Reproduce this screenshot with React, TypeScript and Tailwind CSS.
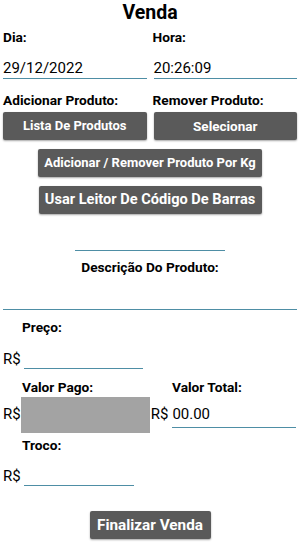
import React from "react";

function Label({ children, className = "" }: { children: React.ReactNode; className?: string }) {
  return <p className={`h-4 text-[13.7px] font-bold leading-4 whitespace-nowrap text-black ${className}`}>{children}</p>;
}

function Btn({ children, className = "" }: { children: React.ReactNode; className?: string }) {
  return (
    <button
      className={`h-7 whitespace-nowrap rounded-[2px] bg-[#5a5a5a] font-bold text-white shadow-[0_1px_2px_rgba(0,0,0,0.35)] ${className}`}
    >
      {children}
    </button>
  );
}

function Line({ className = "" }: { className?: string }) {
  return <div className={`h-px bg-[#4e8ea5] ${className}`} />;
}

function MoneyRow({ lineWidth, className = "" }: { lineWidth: string; className?: string }) {
  return (
    <div className={`flex items-start pl-[3px] ${className}`}>
      <span className="h-4 text-[15px] leading-4">R$</span>
      <Line className={`ml-[3px] mt-[17px] ${lineWidth}`} />
    </div>
  );
}

export default function App() {
  return (
    <div className="w-[300px] h-[551px] bg-white text-black font-['Roboto',sans-serif] overflow-hidden">
      <h1 className="h-[25px] text-center text-[19.5px] font-bold leading-[25px]">Venda</h1>

      <div className="mt-[4px] grid grid-cols-2 gap-x-[7px] px-[3px]">
        <div>
          <Label>Dia:</Label>
          <p className="mt-[14px] h-[18px] text-[15px] leading-[18px]">29/12/2022</p>
          <Line className="mt-[1px]" />
        </div>
        <div>
          <Label className="-ml-[1px]">Hora:</Label>
          <p className="mt-[14px] h-[18px] text-[15px] leading-[18px]">20:26:09</p>
          <Line className="mt-[1px]" />
        </div>
      </div>

      <div className="mt-[13px] grid grid-cols-2 gap-x-[7px] px-[3px]">
        <Label>Adicionar Produto:</Label>
        <Label className="-ml-[1px]">Remover Produto:</Label>
      </div>

      <div className="mt-[4px] grid grid-cols-2 gap-x-[7px] px-[3px]">
        <Btn className="text-[13px]">Lista De Produtos</Btn>
        <Btn className="text-[13.5px]">Selecionar</Btn>
      </div>

      <div className="mt-[9px] flex flex-col items-center gap-[9px]">
        <Btn className="w-[224px] text-[13px]">Adicionar / Remover Produto Por Kg</Btn>
        <Btn className="w-[223px] text-[14.6px]">Usar Leitor De Código De Barras</Btn>
      </div>

      <div className="mt-[36px] flex justify-center">
        <Line className="w-[150px]" />
      </div>
      <Label className="mt-[8px] text-center">Descrição Do Produto:</Label>
      <Line className="mx-[3px] mt-[34px]" />

      <Label className="mt-[9px] ml-[22px]">Preço:</Label>
      <MoneyRow className="mt-[16px] h-[18px]" lineWidth="w-[119px]" />

      <div className="mt-[10px] flex">
        <Label className="ml-[22px] w-[150px]">Valor Pago:</Label>
        <Label>Valor Total:</Label>
      </div>
      <div className="mt-[2px] flex h-[36px] items-start pl-[3px]">
        <span className="mt-[9px] h-4 text-[15px] leading-4">R$</span>
        <div className="h-[36px] w-[129px] bg-[#a3a3a3]" />
        <span className="mt-[9px] ml-px h-4 text-[15px] leading-4">R$</span>
        <div className="ml-[4px] mt-[9px] flex-1 pr-[4px]">
          <p className="h-4 text-[15px] leading-4">00.00</p>
          <Line className="mt-[5px]" />
        </div>
      </div>

      <Label className="mt-[4px] ml-[22px]">Troco:</Label>
      <MoneyRow className="mt-[15px] h-[18px]" lineWidth="w-[110px]" />

      <div className="mt-[25px] flex justify-center">
        <Btn className="w-[121px] text-[15.3px]">Finalizar Venda</Btn>
      </div>
    </div>
  );
}
